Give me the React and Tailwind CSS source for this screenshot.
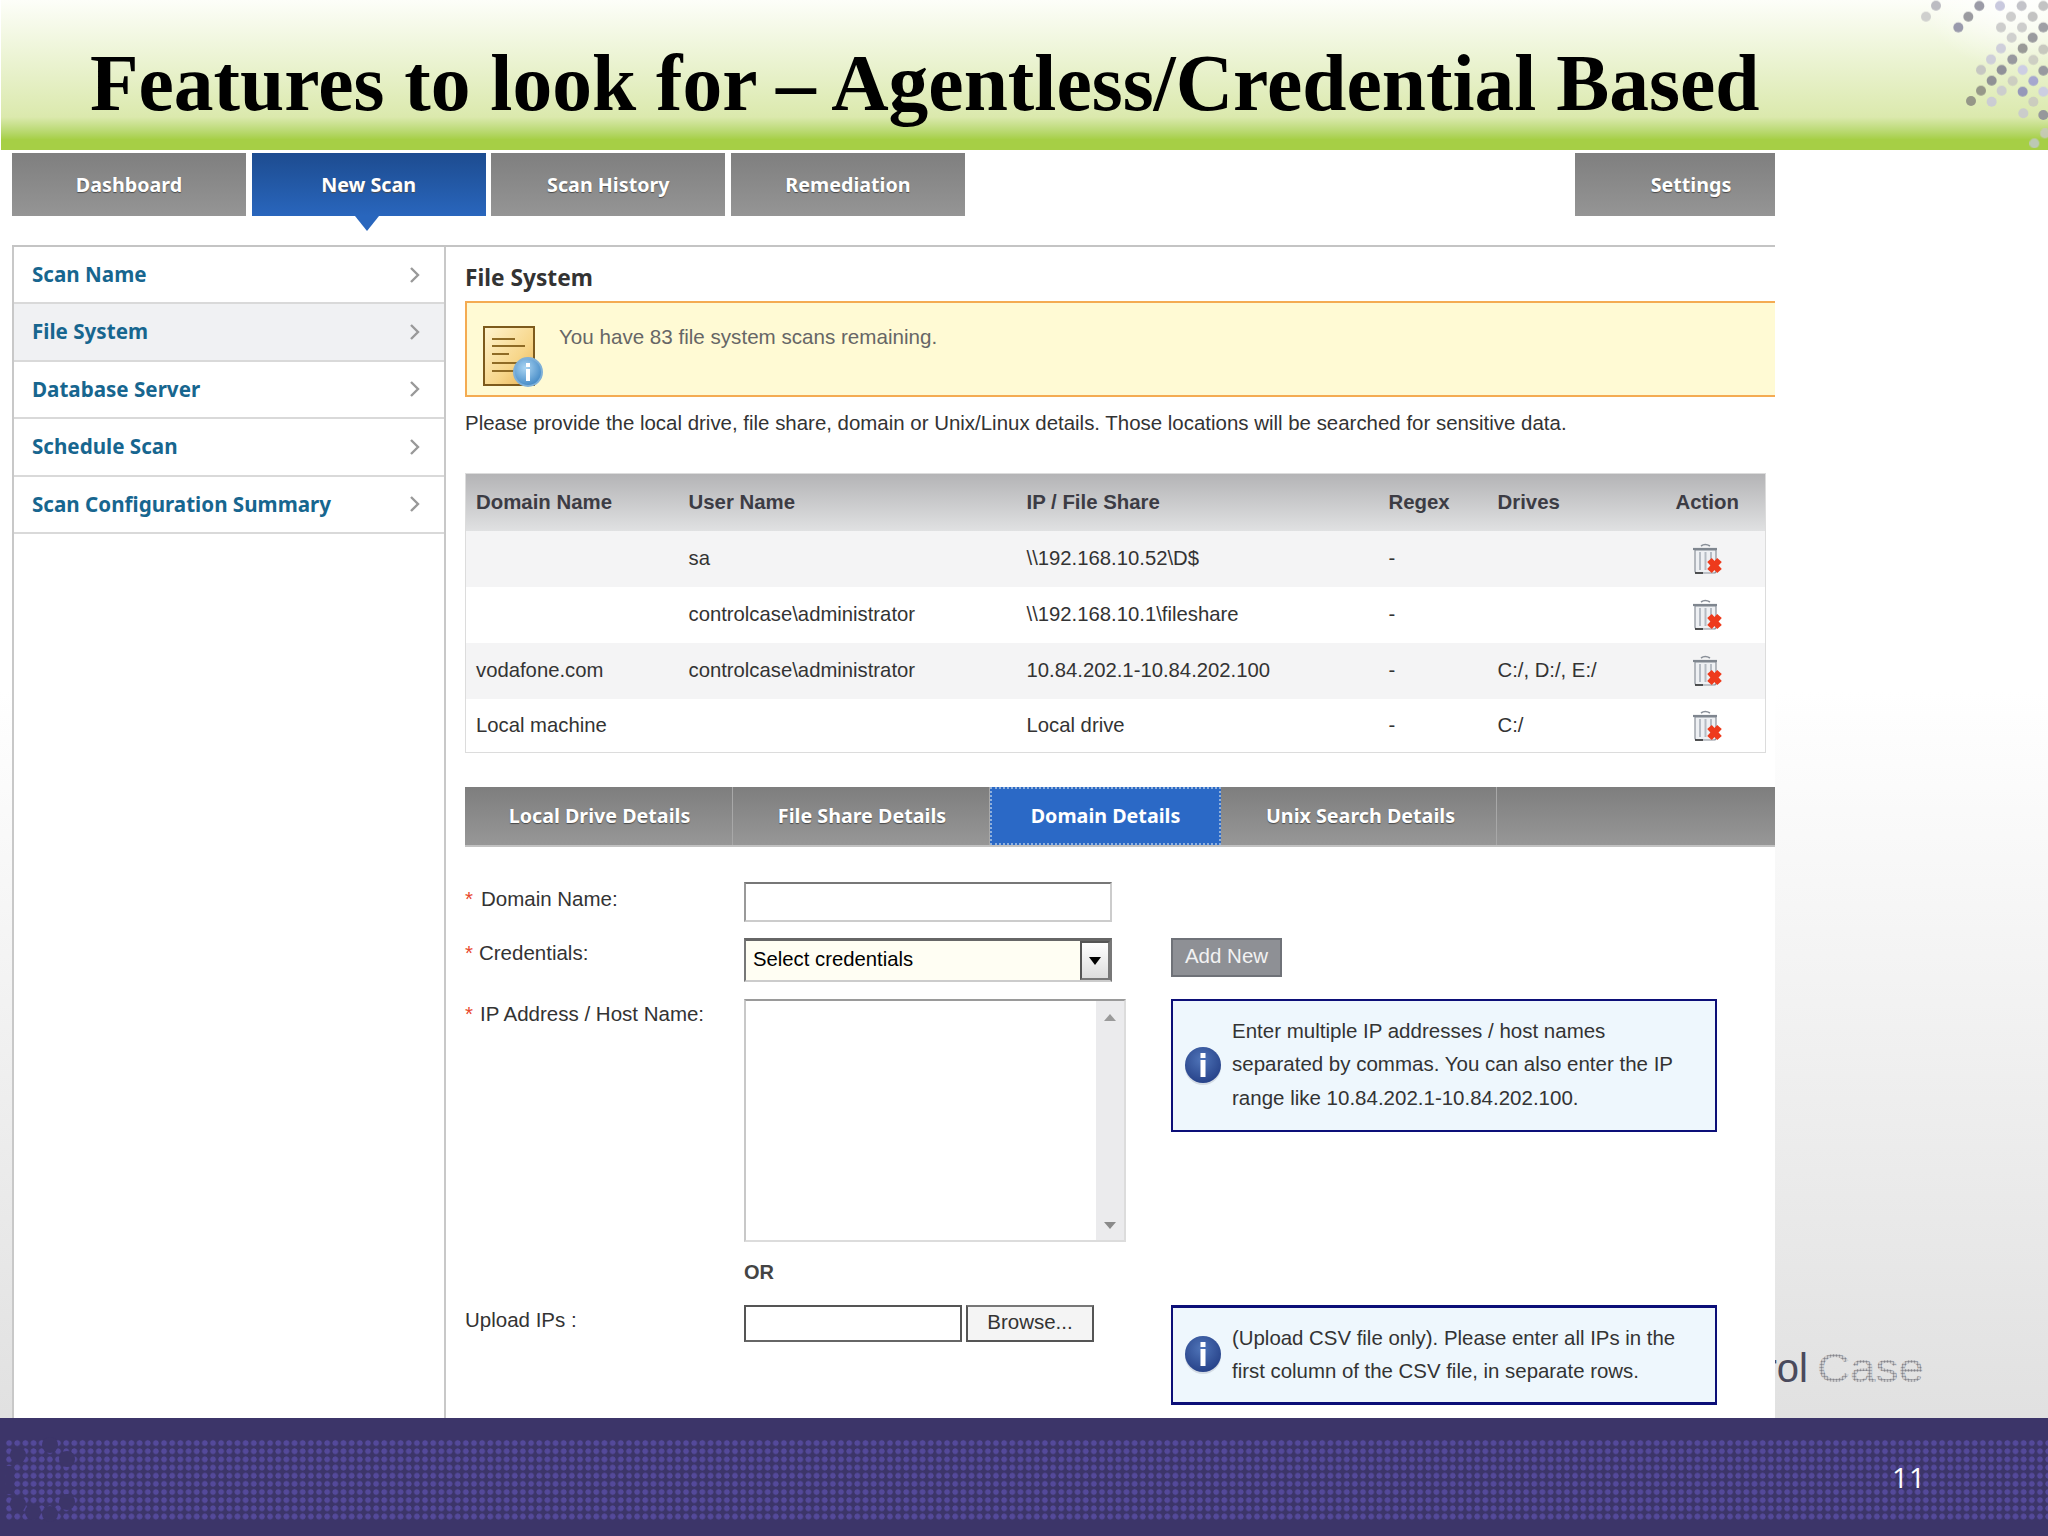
import React from "react";

const sans = "font-['Liberation_Sans',Arial,sans-serif]";
const tah = "font-['Noto_Sans',sans-serif] font-bold";

const dots = [
  [108,17,"#b0b0b8"],[78,50,"#c8c8c8"],[238,18,"#8a8a98"],[205,50,"#8a8a90"],[175,82,"#8888a0"],[300,18,"#c0c0d8"],[365,18,"#b8b8c0"],[430,18,"#b8b8b8"],
  [333,50,"#c4c4c4"],[398,50,"#b8b8b8"],[303,82,"#c4c4c4"],[366,82,"#c4c4c4"],[430,82,"#8f8f98"],[335,113,"#c8c8c8"],[398,113,"#8a8a90"],[303,145,"#c8c8d8"],
  [368,145,"#8a8a8a"],[430,148,"#c0c0b8"],[273,178,"#c8c8d8"],[337,178,"#888894"],[400,180,"#c8c8c0"],[243,210,"#c0c0c0"],[305,210,"#80808f"],[368,210,"#c8c8e8"],
  [430,212,"#8a8a98"],[275,242,"#80808c"],[338,243,"#c8c8c0"],[400,243,"#9a9ad0"],[243,272,"#88887f"],[305,272,"#c8c8d0"],[368,275,"#8888b8"],[430,275,"#c8c8e8"],
  [213,303,"#88887f"],[275,305,"#c8c8d8"],[400,305,"#c8c8c0"],[370,340,"#c8c8d0"],[430,345,"#8a8a98"],[435,400,"#c8c8c0"],[403,430,"#c0c8c8"],
];

function HeaderDots() {
  return (
    <svg className="absolute right-0 top-0" width="148" height="150" viewBox="0 0 444 450">
      <defs>
        <radialGradient id="halo" cx="75%" cy="0%" r="60%">
          <stop offset="0%" stopColor="#ffffff" stopOpacity="0.9" />
          <stop offset="100%" stopColor="#ffffff" stopOpacity="0" />
        </radialGradient>
      </defs>
      <rect width="444" height="340" fill="url(#halo)" />
      <g className="blur-[1px]">
        {dots.map(([x, y, c], i) => (
          <circle key={i} cx={x} cy={y} r="15" fill={c} opacity="0.85" />
        ))}
      </g>
    </svg>
  );
}

function Chevron() {
  return (
    <svg width="12" height="20" viewBox="0 0 12 20" fill="none">
      <path d="M2 3 L9 10 L2 17" stroke="#999999" strokeWidth="2.4" />
    </svg>
  );
}

function NoteIcon() {
  return (
    <svg width="60" height="62" viewBox="0 0 60 62">
      <defs>
        <linearGradient id="paper" x1="0" y1="0" x2="1" y2="1">
          <stop offset="0%" stopColor="#fff4cf" />
          <stop offset="60%" stopColor="#f7d68a" />
          <stop offset="100%" stopColor="#e8b050" />
        </linearGradient>
        <radialGradient id="ib" cx="40%" cy="35%" r="70%">
          <stop offset="0%" stopColor="#a9d4f2" />
          <stop offset="100%" stopColor="#3f86c4" />
        </radialGradient>
      </defs>
      <rect x="1" y="1" width="50" height="58" fill="url(#paper)" stroke="#7d5a1c" strokeWidth="2" />
      <path d="M9 13H32M9 20H42M9 28H26M9 37H38M9 45H34" stroke="#8f6b25" strokeWidth="2" />
      <circle cx="45" cy="46" r="14" fill="url(#ib)" stroke="#7fb0d8" strokeWidth="2" />
      <rect x="43" y="37" width="4" height="4" fill="#fff" />
      <rect x="43" y="43" width="4" height="12" fill="#fff" />
    </svg>
  );
}

function Trash() {
  return (
    <svg width="30" height="31" viewBox="0 0 30 31">
      <path d="M3 7 H24 V28 Q24 30 22 30 H5 Q3 30 3 28 Z" fill="#eef0f3" stroke="#8a9099" strokeWidth="1.2" />
      <path d="M8 9V27M13.5 9V27M19 9V27" stroke="#b6bcc4" strokeWidth="2" />
      <path d="M1 6 H25" stroke="#7f868f" strokeWidth="2.2" />
      <path d="M9 3 Q13 0 18 3" stroke="#8a9099" strokeWidth="1.6" fill="none" />
      <path d="M3 30H11" stroke="#333" strokeWidth="1.6" />
      <path d="M17.5 17 L27.5 28 M27.5 17 L17.5 28" stroke="#ee3a1c" strokeWidth="6.2" />
    </svg>
  );
}

function InfoIcon({ id }) {
  return (
    <svg width="38" height="40" viewBox="0 0 38 40" className="shrink-0">
      <defs>
        <radialGradient id={id} cx="45%" cy="35%" r="70%">
          <stop offset="0%" stopColor="#4f74b8" />
          <stop offset="100%" stopColor="#243f86" />
        </radialGradient>
      </defs>
      <ellipse cx="19" cy="21" rx="18" ry="18" fill="#b8c0cc" opacity="0.5" />
      <ellipse cx="19" cy="19" rx="18" ry="18" fill={`url(#${id})`} />
      <rect x="16.5" y="7" width="5" height="5" fill="#fff" />
      <rect x="16.5" y="14" width="5" height="17" fill="#fff" />
    </svg>
  );
}

function TopTab({ children, active, className = "" }) {
  return (
    <div
      className={`relative flex h-[63px] items-center justify-center ${tah} text-[19.7px] text-white [text-shadow:0_1px_1px_#4a4a4a] ${
        active ? "bg-linear-to-b from-[#1d4c90] to-[#2966bd]" : "bg-linear-to-b from-[#7f7f7f] to-[#959595]"
      } ${className}`}
    >
      {children}
      {active && (
        <span className="absolute left-[103px] top-[63px] h-0 w-0 border-x-[12px] border-t-[15px] border-x-transparent border-t-[#2966bd]" />
      )}
    </div>
  );
}

function SideRow({ label, active, first }) {
  return (
    <div
      className={`flex items-center justify-between border-b-2 border-[#d9d9d9] pl-[18px] pr-[23px] ${first ? "h-[57px]" : "h-[57.5px]"} ${active ? "bg-[#f0f1f3]" : "bg-white"}`}
    >
      <span className={`${tah} text-[20.6px] text-[#17668f]`}>{label}</span>
      <Chevron />
    </div>
  );
}

const rows = [
  ["", "sa", "\\\\192.168.10.52\\D$", "-", "", "h-[56px] bg-[#f4f4f5]"],
  ["", "controlcase\\administrator", "\\\\192.168.10.1\\fileshare", "-", "", "h-[56px] bg-white"],
  ["vodafone.com", "controlcase\\administrator", "10.84.202.1-10.84.202.100", "-", "C:/, D:/, E:/", "h-[56px] bg-[#f4f4f5]"],
  ["Local machine", "", "Local drive", "-", "C:/", "h-[54px] bg-white"],
];

function Label({ star = true, children, gap = "ml-[6px]", mt = "mt-[3px]" }) {
  return (
    <div className={`${mt} flex w-[279px] shrink-0 text-[20.5px] leading-[24px] text-[#333] ${sans}`}>
      {star && <span className="text-[#e8472c]">*</span>}
      <span className={star ? gap : ""}>{children}</span>
    </div>
  );
}

export default function App() {
  return (
    <div className="relative flex h-[1536px] w-[2048px] flex-col overflow-hidden bg-linear-to-b from-white from-45% to-[#dcdcdc]">
      <header className="relative ml-px flex h-[150px] shrink-0 items-start overflow-hidden bg-linear-to-b from-[#fdfef9] via-[#dbe9ad] via-78% to-[#a6cf45] to-93% pl-[89px]">
        <h1 className="relative mt-[37px] whitespace-nowrap font-['Liberation_Serif','Times_New_Roman',serif] text-[79.5px] font-bold leading-[92px] text-black">
          Features to look for – Agentless/Credential Based
        </h1>
        <HeaderDots />
      </header>

      <svg className="absolute left-[1700px] top-[1330px]" width="250" height="70" viewBox="0 0 250 70">
        <defs>
          <pattern id="dotfill" width="3" height="3" patternUnits="userSpaceOnUse">
            <circle cx="1.5" cy="1.5" r="1.2" fill="#85858c" />
          </pattern>
        </defs>
        <text x="108" y="52" textAnchor="end" fontFamily="Liberation Sans" fontSize="40" fill="#4a4a5c">rol</text>
        <text
          x="117"
          y="52"
          textLength="107"
          lengthAdjust="spacingAndGlyphs"
          fontFamily="Liberation Sans"
          fontSize="40"
          fill="url(#dotfill)"
        >
          Case
        </text>
      </svg>

      <main className="flex-1">
        <nav className="mt-[3px] flex w-[1775px] gap-[5.67px] pl-3">
          <TopTab className="w-[234px]">Dashboard</TopTab>
          <TopTab className="w-[234px]" active>New Scan</TopTab>
          <TopTab className="w-[234px]">Scan History</TopTab>
          <TopTab className="w-[234px]">Remediation</TopTab>
          <TopTab className="ml-auto w-[200px] pl-[32px]">Settings</TopTab>
        </nav>

        <section className="relative z-10 ml-3 mt-[29px] flex h-[1173px] w-[1763px] border-t-2 border-[#c4c4c4] bg-white">
          <aside className="w-[434px] shrink-0 border-x-2 border-[#c8c8c8]">
            <SideRow label="Scan Name" first />
            <SideRow label="File System" active />
            <SideRow label="Database Server" />
            <SideRow label="Schedule Scan" />
            <SideRow label="Scan Configuration Summary" />
          </aside>

          <div className="min-w-0 flex-1 pl-[19px]">
            <h2 className={`flex h-[54px] items-center pt-[9px] ${tah} text-[22.7px] text-[#333]`}>File System</h2>

            <div className={`flex h-[96px] items-start border-y-2 border-l-2 border-[#f4ab52] bg-[#fffad4] ${sans}`}>
              <div className="ml-[16px] mt-[23px]"><NoteIcon /></div>
              <p className="ml-[16px] mt-[22px] text-[20.6px] leading-[24px] text-[#666]">You have 83 file system scans remaining.</p>
            </div>

            <p className={`mt-[14px] whitespace-nowrap text-[20.45px] leading-[24px] text-[#333] ${sans}`}>
              Please provide the local drive, file share, domain or Unix/Linux details. Those locations will be searched for sensitive data.
            </p>

            <table className={`mt-[38px] w-[1300px] table-fixed border-collapse border border-[#dcdcdc] text-left text-[20.3px] text-[#333] ${sans}`}>
              <colgroup>
                <col className="w-[213px]" />
                <col className="w-[338px]" />
                <col className="w-[362px]" />
                <col className="w-[109px]" />
                <col className="w-[178px]" />
                <col className="w-[100px]" />
              </colgroup>
              <thead>
                <tr className="h-[57px] bg-linear-to-b from-[#b4b4b6] to-[#e0e1e2]">
                  {["Domain Name", "User Name", "IP / File Share", "Regex", "Drives", "Action"].map((h) => (
                    <th key={h} className="pl-[10px] pt-[1px] text-[20.4px] font-bold text-[#3c3c44]">{h}</th>
                  ))}
                </tr>
              </thead>
              <tbody>
                {rows.map((r, i) => (
                  <tr key={i} className={r[5]}>
                    <td className="pl-[10px]">{r[0]}</td>
                    <td className="pl-[10px]">{r[1]}</td>
                    <td className="pl-[10px]">{r[2]}</td>
                    <td className="pl-[10px]">{r[3]}</td>
                    <td className="pl-[10px]">{r[4]}</td>
                    <td className="pl-[26px] align-middle"><Trash /></td>
                  </tr>
                ))}
              </tbody>
            </table>

            <div className={`mt-[34px] flex h-[60px] border-b-2 border-[#c2c2c2] bg-linear-to-b from-[#7e7e7e] to-[#979797] ${tah} text-[19.7px] text-white [text-shadow:0_1px_1px_#4a4a4a]`}>
              <div className="flex w-[268px] items-center justify-center border-r border-[#a8a8a8] pl-[2px]">Local Drive Details</div>
              <div className="flex w-[257px] items-center justify-center border-r border-[#a8a8a8] pl-[2px]">File Share Details</div>
              <div className="flex w-[231px] items-center justify-center border-2 border-dotted border-[#8fb0dc] bg-[#2b69c6] [text-shadow:none]">Domain Details</div>
              <div className="flex w-[276px] items-center justify-center border-r border-[#a8a8a8] pl-[4px]">Unix Search Details</div>
            </div>

            <div className="mt-[35px] flex h-[40px]">
              <Label gap="ml-[8px]" mt="mt-[5px]">Domain Name:</Label>
              <input className="h-[40px] w-[368px] border-2 border-t-[#777] border-l-[#999] border-r-[#ccc] border-b-[#ccc] bg-white" readOnly />
            </div>

            <div className="mt-[16px] flex h-[44px]">
              <Label gap="ml-[6px]">Credentials:</Label>
              <div className={`flex h-[44px] w-[368px] border-x-2 border-b-2 border-t-[3px] border-t-[#666] border-l-[#777] border-r-[#777] border-b-[#ccc] bg-[#fffef3] ${sans}`}>
                <div className="flex flex-1 items-center pb-[2px] pl-[7px] text-[20.3px] text-black">Select credentials</div>
                <div className="flex w-[30px] items-center justify-center border-2 border-t-[#555] border-l-[#555] border-r-[#777] border-b-[#777] bg-linear-to-b from-[#fff] to-[#ddd]">
                  <span className="h-0 w-0 border-x-[6px] border-t-[8px] border-x-transparent border-t-black" />
                </div>
              </div>
              <button className={`ml-[59px] h-[39px] w-[111px] border-2 border-[#6f7278] bg-[#8e9095] pb-[3px] text-[20.5px] text-[#f2f2f2] ${sans}`}>Add New</button>
            </div>

            <div className="mt-[17px] flex h-[243px]">
              <Label gap="ml-[7px]">IP Address / Host Name:</Label>
              <div className="flex h-[243px] w-[382px] border-2 border-t-[#9a9a9a] border-l-[#c8c8c8] border-r-[#dcdcdc] border-b-[#dcdcdc] bg-white">
                <div className="flex-1" />
                <div className="flex w-[28px] flex-col items-center justify-between bg-[#ebebed] pb-[11px] pt-[13px]">
                  <span className="h-0 w-0 border-x-[6px] border-b-[7px] border-x-transparent border-b-[#9a9a9a]" />
                  <span className="h-0 w-0 border-x-[6px] border-t-[7px] border-x-transparent border-t-[#8a8a8a]" />
                </div>
              </div>
              <div className={`ml-[45px] flex h-[133px] w-[546px] items-center border-2 border-[#0c0f78] bg-[#eef7fd] pl-[11px] text-[20.5px] leading-[33.5px] text-[#333] ${sans}`}>
                <InfoIcon id="i1" />
                <p className="ml-[10px] mt-[-3px] whitespace-nowrap">
                  Enter multiple IP addresses / host names<br />
                  separated by commas. You can also enter the IP<br />
                  range like 10.84.202.1-10.84.202.100.
                </p>
              </div>
            </div>

            <div className={`ml-[279px] mt-[18px] text-[20px] font-bold leading-[24px] text-[#444] ${sans}`}>OR</div>

            <div className="mt-[21px] flex h-[100px]">
              <Label star={false}>Upload IPs :</Label>
              <input className="h-[37px] w-[218px] border-2 border-[#555] border-b-[#666] bg-white" readOnly />
              <button className={`ml-[4px] h-[37px] w-[128px] border-2 border-[#555] border-t-[#777] bg-[#f4f4f4] pb-[3px] text-[20.5px] text-[#333] ${sans}`}>Browse...</button>
              <div className={`ml-[77px] flex h-[100px] w-[546px] items-center border-2 border-t-[3px] border-b-[3px] border-[#0c0f78] bg-[#eef7fd] pl-[11px] text-[20.4px] leading-[33px] text-[#333] ${sans}`}>
                <InfoIcon id="i2" />
                <p className="ml-[10px] whitespace-nowrap">
                  (Upload CSV file only). Please enter all IPs in the<br />
                  first column of the CSV file, in separate rows.
                </p>
              </div>
            </div>
          </div>
        </section>
      </main>

      <footer className="relative h-[120px] shrink-0 bg-[#3c3569] pl-[5px] pt-[21px]">
        <div className="h-[82px] bg-[radial-gradient(circle,#54499a_2.6px,transparent_3.1px)] bg-[length:8.17px_8.17px]" />
        <svg className="absolute left-0 top-0" width="90" height="120" viewBox="0 0 90 120">
          <g fill="#3c3569">
            <circle cx="18" cy="37" r="8" />
            <circle cx="50" cy="27" r="8" />
            <circle cx="67" cy="41" r="8" />
            <circle cx="18" cy="86" r="8" />
            <circle cx="33" cy="94" r="8" />
            <circle cx="50" cy="96" r="8" />
            <circle cx="67" cy="84" r="8" />
            <rect x="6" y="48" width="8" height="28" />
          </g>
        </svg>
        <span className="absolute left-[1892px] top-[42px] font-['Open_Sans',sans-serif] text-[28px] leading-[34px] tracking-[1px] text-white">11</span>
      </footer>
    </div>
  );
}
